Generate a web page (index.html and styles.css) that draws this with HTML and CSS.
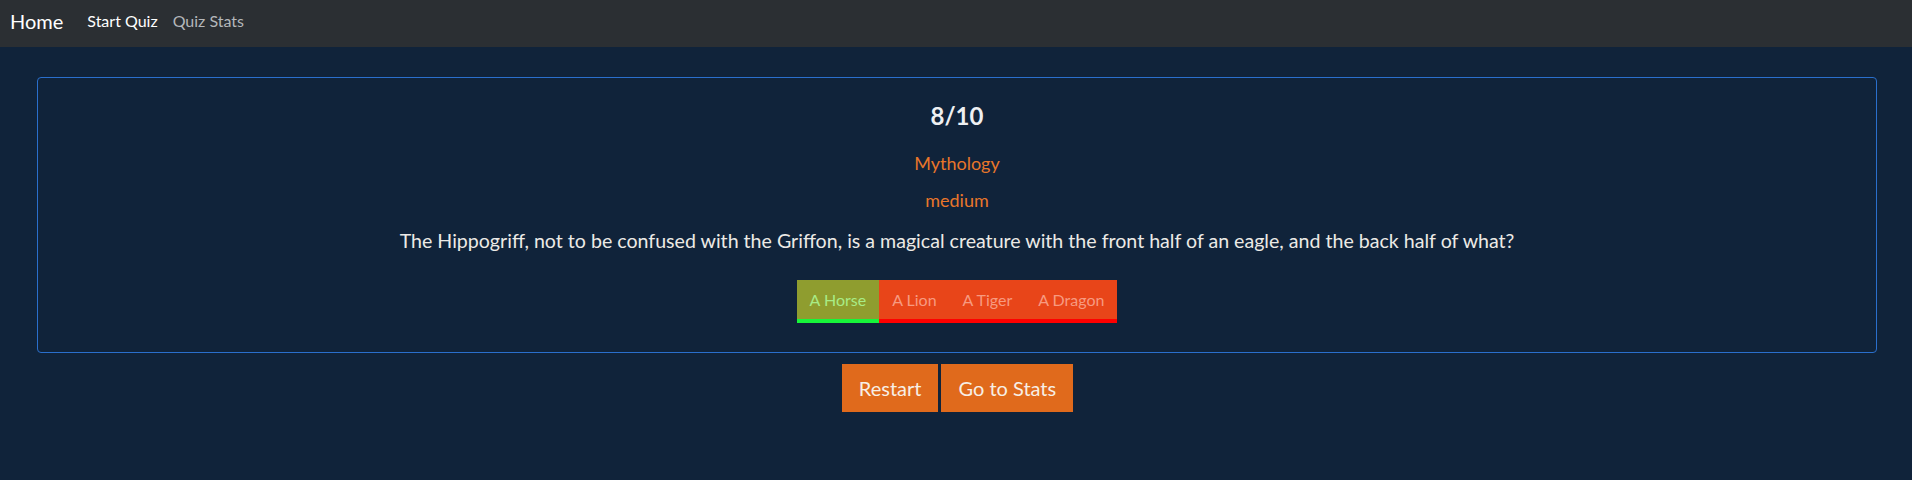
FILE: index.html
```html
<!DOCTYPE html>
<html lang="en">
<head>
<meta charset="utf-8">
<title>Quiz</title>
<link rel="stylesheet" href="styles.css">
</head>
<body>
<nav class="navbar">
  <a class="brand" href="#">Home</a>
  <a class="nav-link active" href="#">Start Quiz</a>
  <a class="nav-link" href="#">Quiz Stats</a>
</nav>
<main class="main">
  <section class="card">
    <h2 class="progress">8/10</h2>
    <p class="category">Mythology</p>
    <p class="difficulty">medium</p>
    <p class="question">The Hippogriff, not to be confused with the Griffon, is a magical creature with the front half of an eagle, and the back half of what?</p>
    <div class="answers">
      <button class="answer correct">A Horse</button>
      <button class="answer wrong">A Lion</button>
      <button class="answer wrong">A Tiger</button>
      <button class="answer wrong">A Dragon</button>
    </div>
  </section>
  <div class="actions">
    <button class="action">Restart</button>
    <button class="action">Go to Stats</button>
  </div>
</main>
</body>
</html>
```

FILE: styles.css
```css
* { box-sizing: border-box; }
html, body {
  margin: 0;
  padding: 0;
  background: #10233a;
  font-family: Lato, "Open Sans", sans-serif;
  height: 100%;
}
.navbar {
  height: 47px;
  background: #2b2f33;
  display: flex;
  align-items: center;
  padding: 0 10px;
}
.brand {
  color: #ffffff;
  font-size: 20px;
  text-decoration: none;
  margin-right: 24px;
  margin-top: -5px;
}
.nav-link {
  color: #b4b7ba;
  font-size: 16px;
  text-decoration: none;
  margin-right: 15px;
  margin-top: -6px;
}
.nav-link.active { color: #ffffff; }
.main {
  padding: 30px 35px 0 37px;
}
.card {
  border: 1px solid #2a6fcc;
  border-radius: 4px;
  padding: 24px 16px 29px;
  text-align: center;
}
.progress {
  margin: 0;
  font-size: 24px;
  line-height: 28px;
  font-weight: 700;
  color: #eef0f2;
}
.category {
  margin: 21px 0 0;
  font-size: 18px;
  line-height: 24px;
  color: #e8762a;
}
.difficulty {
  margin: 13px 0 0;
  font-size: 18px;
  line-height: 24px;
  color: #e8762a;
}
.question {
  margin: 16px 0 0;
  font-size: 19.6px;
  line-height: 26px;
  color: #eceae6;
}
.answers {
  margin-top: 26px;
  display: flex;
  justify-content: center;
}
.answer {
  height: 43px;
  padding: 0 13px;
  border: none;
  border-bottom: 4px solid #ff0000;
  font-family: Lato, sans-serif;
  font-size: 16px;
  background: #e84519;
  color: #f79a80;
  cursor: pointer;
}
.answer.correct {
  background: #8f9d2f;
  color: #a8ec86;
  border-bottom-color: #17f53a;
}
.actions {
  margin-top: 11px;
  display: flex;
  justify-content: center;
  gap: 3px;
  padding-left: 1px;
}
.action {
  height: 48px;
  padding: 0 17px;
  border: none;
  background: #e06a1c;
  color: #f7efe6;
  font-family: Lato, sans-serif;
  font-size: 20px;
  cursor: pointer;
}
```
